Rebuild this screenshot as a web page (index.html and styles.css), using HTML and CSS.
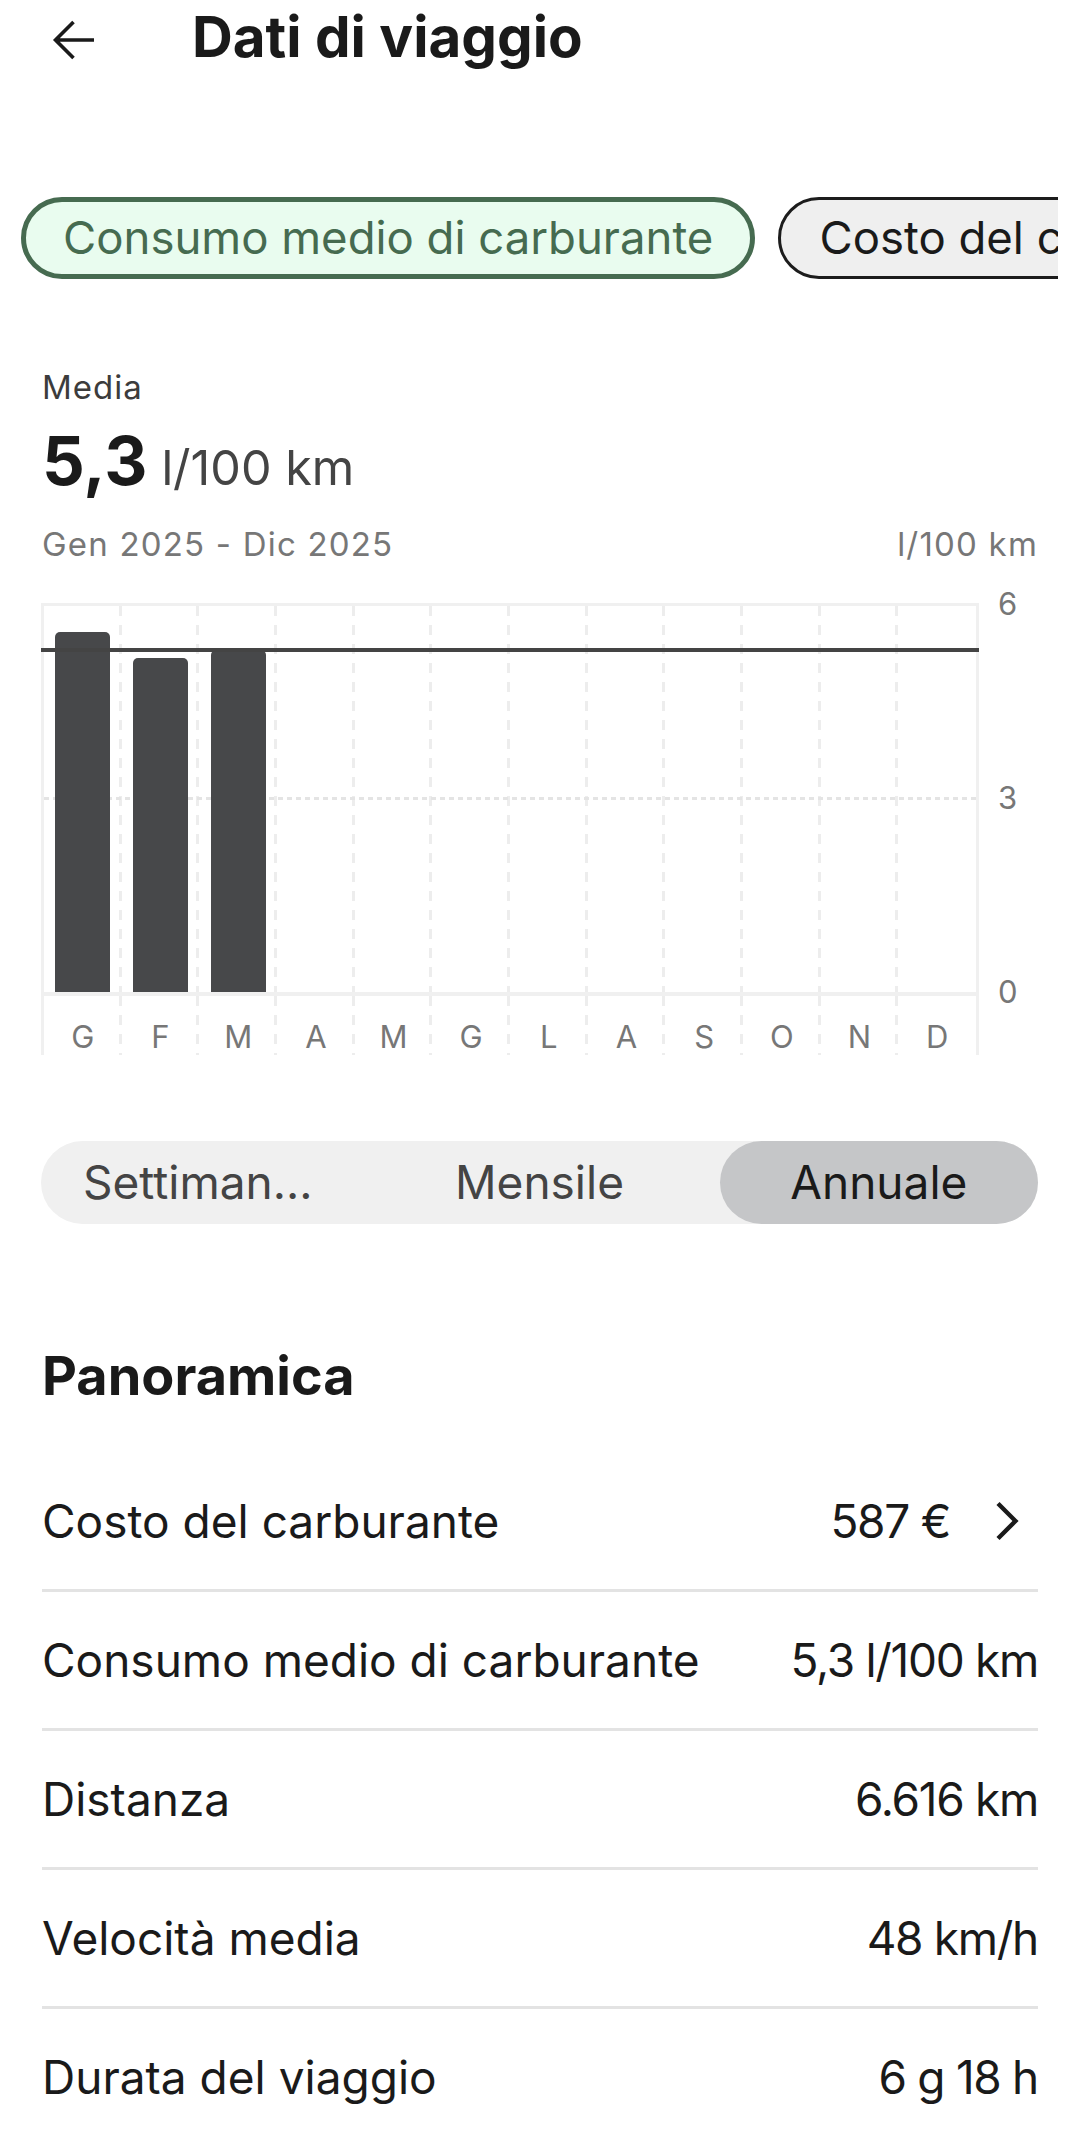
FILE: index.html
```html
<!DOCTYPE html>
<html lang="it">
<head>
<meta charset="utf-8">
<title>Dati di viaggio</title>
<link rel="stylesheet" href="styles.css">
</head>
<body>
<div class="page">
  <header class="topbar">
    <svg class="back" viewBox="0 0 42 40" aria-hidden="true">
      <path d="M42 20 H4 M21.5 2 L3.5 20 L21.5 38" fill="none" stroke="#1a1a1a" stroke-width="3.6"/>
    </svg>
    <h1 class="title">Dati di viaggio</h1>
  </header>

  <div class="chips">
    <div class="chip chip-active">Consumo medio di carburante</div>
    <div class="chip chip-other">Costo del carburante</div>
  </div>

  <section class="summary">
    <div class="label">Media</div>
    <div class="big">
      <span class="big-num">5,3</span>
      <span class="big-unit">l/100 km</span>
    </div>
    <div class="range">
      <span>Gen 2025 - Dic 2025</span>
      <span>l/100 km</span>
    </div>
  </section>

  <section class="chart">
    <div class="plot">
      <div class="col"><div class="bar" style="height:360px"></div></div>
      <div class="col"><div class="bar" style="height:334px"></div></div>
      <div class="col"><div class="bar" style="height:342px"></div></div>
      <div class="col"></div>
      <div class="col"></div>
      <div class="col"></div>
      <div class="col"></div>
      <div class="col"></div>
      <div class="col"></div>
      <div class="col"></div>
      <div class="col"></div>
      <div class="col last"></div>
      <div class="mid"></div>
      <div class="avg"></div>
    </div>
    <div class="yaxis">
      <div>6</div>
      <div>3</div>
      <div>0</div>
    </div>
    <div class="months">
      <div class="month">G</div>
      <div class="month">F</div>
      <div class="month">M</div>
      <div class="month">A</div>
      <div class="month">M</div>
      <div class="month">G</div>
      <div class="month">L</div>
      <div class="month">A</div>
      <div class="month">S</div>
      <div class="month">O</div>
      <div class="month">N</div>
      <div class="month last">D</div>
    </div>
  </section>

  <div class="segment">
    <div class="seg">Settimanale</div>
    <div class="seg">Mensile</div>
    <div class="seg on">Annuale</div>
  </div>

  <h2 class="section-title">Panoramica</h2>

  <div class="rows">
    <div class="row">
      <span>Costo del carburante</span>
      <span class="val-wrap">
        <span class="val">587 €</span>
        <svg class="chev" viewBox="0 0 26 40" aria-hidden="true">
          <path d="M4 2.5 L21.5 20 L4 37.5" fill="none" stroke="#1a1a1a" stroke-width="4.4"/>
        </svg>
      </span>
    </div>
    <div class="row">
      <span>Consumo medio di carburante</span>
      <span class="val">5,3 l/100 km</span>
    </div>
    <div class="row">
      <span>Distanza</span>
      <span class="val">6.616 km</span>
    </div>
    <div class="row">
      <span>Velocità media</span>
      <span class="val">48 km/h</span>
    </div>
    <div class="row">
      <span>Durata del viaggio</span>
      <span class="val">6 g 18 h</span>
    </div>
  </div>
</div>
</body>
</html>
```

FILE: styles.css
```css
* {
  box-sizing: border-box;
  margin: 0;
  padding: 0;
}

html, body {
  background: #ffffff;
}

body {
  font-family: Inter, "Noto Sans", sans-serif;
  color: #1a1a1a;
}

.page {
  width: 1079px;
  height: 2136px;
  overflow: hidden;
}

/* header */
.topbar {
  display: flex;
  align-items: center;
  height: 80px;
}

.back {
  width: 42px;
  height: 40px;
  margin-left: 52px;
  flex-shrink: 0;
}

.title {
  margin-left: 98px;
  margin-bottom: 7px;
  font-size: 56.5px;
  font-weight: 700;
  line-height: 74px;
}

/* chips */
.chips {
  display: flex;
  gap: 23px;
  margin: 117px 21px 0 21px;
  overflow: hidden;
}

.chip {
  flex-shrink: 0;
  height: 82px;
  border-radius: 41px;
  display: flex;
  align-items: center;
  padding: 0 37px;
  font-size: 45.5px;
  line-height: 1;
  white-space: nowrap;
}

.chip-active {
  border: 5px solid #466b50;
  background: #e9fcef;
  color: #466b50;
}

.chip-other {
  border: 3px solid #1c1c1c;
  background: #efefef;
  color: #1a1a1a;
  padding-left: 38px;
}

/* summary */
.summary {
  margin: 90px 41px 0 42px;
}

.label {
  font-size: 33px;
  letter-spacing: 1px;
  line-height: 36px;
  color: #3c3c3c;
}

.big {
  display: flex;
  align-items: baseline;
  gap: 14px;
  margin-top: 18px;
  height: 75px;
}

.big-num {
  font-size: 67px;
  font-weight: 700;
  line-height: 75px;
  color: #1a1a1a;
}

.big-unit {
  font-size: 48.5px;
  line-height: 48px;
  color: #444444;
}

.range {
  display: flex;
  justify-content: space-between;
  margin-top: 28px;
  font-size: 33px;
  letter-spacing: 1.2px;
  line-height: 36px;
  color: #777777;
}

/* chart */
.chart {
  display: grid;
  grid-template-columns: 938px auto;
  column-gap: 19px;
  margin: 41px 0 0 41px;
}

.plot {
  position: relative;
  height: 393px;
  border: 3px solid #f0f0f0;
  border-bottom-width: 4px;
  display: grid;
  grid-template-columns: repeat(12, 1fr);
}

.col,
.month {
  background-image: linear-gradient(to bottom, #ededed 0, #ededed 10px, transparent 10px);
  background-size: 3px 19px;
  background-repeat: repeat-y;
  background-position: right 0 top 0;
}

.col.last,
.month.last {
  background-image: none;
}

.col {
  display: flex;
  justify-content: center;
  align-items: flex-end;
}

.bar {
  position: relative;
  z-index: 1;
  width: 55px;
  background: #47484a;
  border-radius: 5px 5px 0 0;
}

.mid {
  position: absolute;
  left: 0;
  right: 0;
  bottom: 192px;
  height: 3px;
  background: repeating-linear-gradient(to right, #e4e4e4 0, #e4e4e4 5px, transparent 5px, transparent 9px);
}

.avg {
  position: absolute;
  z-index: 2;
  left: -3px;
  right: -3px;
  bottom: 340px;
  height: 4px;
  background: #444444;
}

.yaxis {
  display: flex;
  flex-direction: column;
  justify-content: space-between;
  padding: 1px 0 4px;
  font-size: 31px;
  line-height: 0;
  color: #777777;
}

.months {
  grid-column: 1;
  display: grid;
  grid-template-columns: repeat(12, 1fr);
  height: 59px;
  border-left: 3px solid #f0f0f0;
  border-right: 3px solid #f0f0f0;
}

.month {
  text-align: center;
  padding-top: 22px;
  font-size: 31px;
  line-height: 37px;
  color: #777777;
}

/* segmented control */
.segment {
  display: flex;
  gap: 21px;
  margin: 86px 41px 0 41px;
  height: 83px;
  border-radius: 42px;
  background: #f0f0f0;
}

.seg {
  flex: 1 1 0;
  min-width: 0;
  padding: 0 42px;
  border-radius: 42px;
  font-size: 46px;
  line-height: 83px;
  text-align: center;
  white-space: nowrap;
  overflow: hidden;
  text-overflow: ellipsis;
  color: #444444;
}

.seg.on {
  background: #c5c6c8;
  color: #1a1a1a;
}

/* overview */
.section-title {
  margin: 119px 0 0 42px;
  font-size: 54px;
  font-weight: 700;
  line-height: 66px;
}

.rows {
  margin: 44px 41px 0 42px;
}

.row {
  display: flex;
  align-items: center;
  justify-content: space-between;
  height: 139px;
  border-bottom: 3px solid #e3e3e3;
  font-size: 46px;
  white-space: nowrap;
}

.val {
  letter-spacing: -1.3px;
}

.val-wrap {
  display: flex;
  align-items: center;
}

.chev {
  width: 26px;
  height: 40px;
  margin-left: 44px;
  margin-right: 18px;
}
```
